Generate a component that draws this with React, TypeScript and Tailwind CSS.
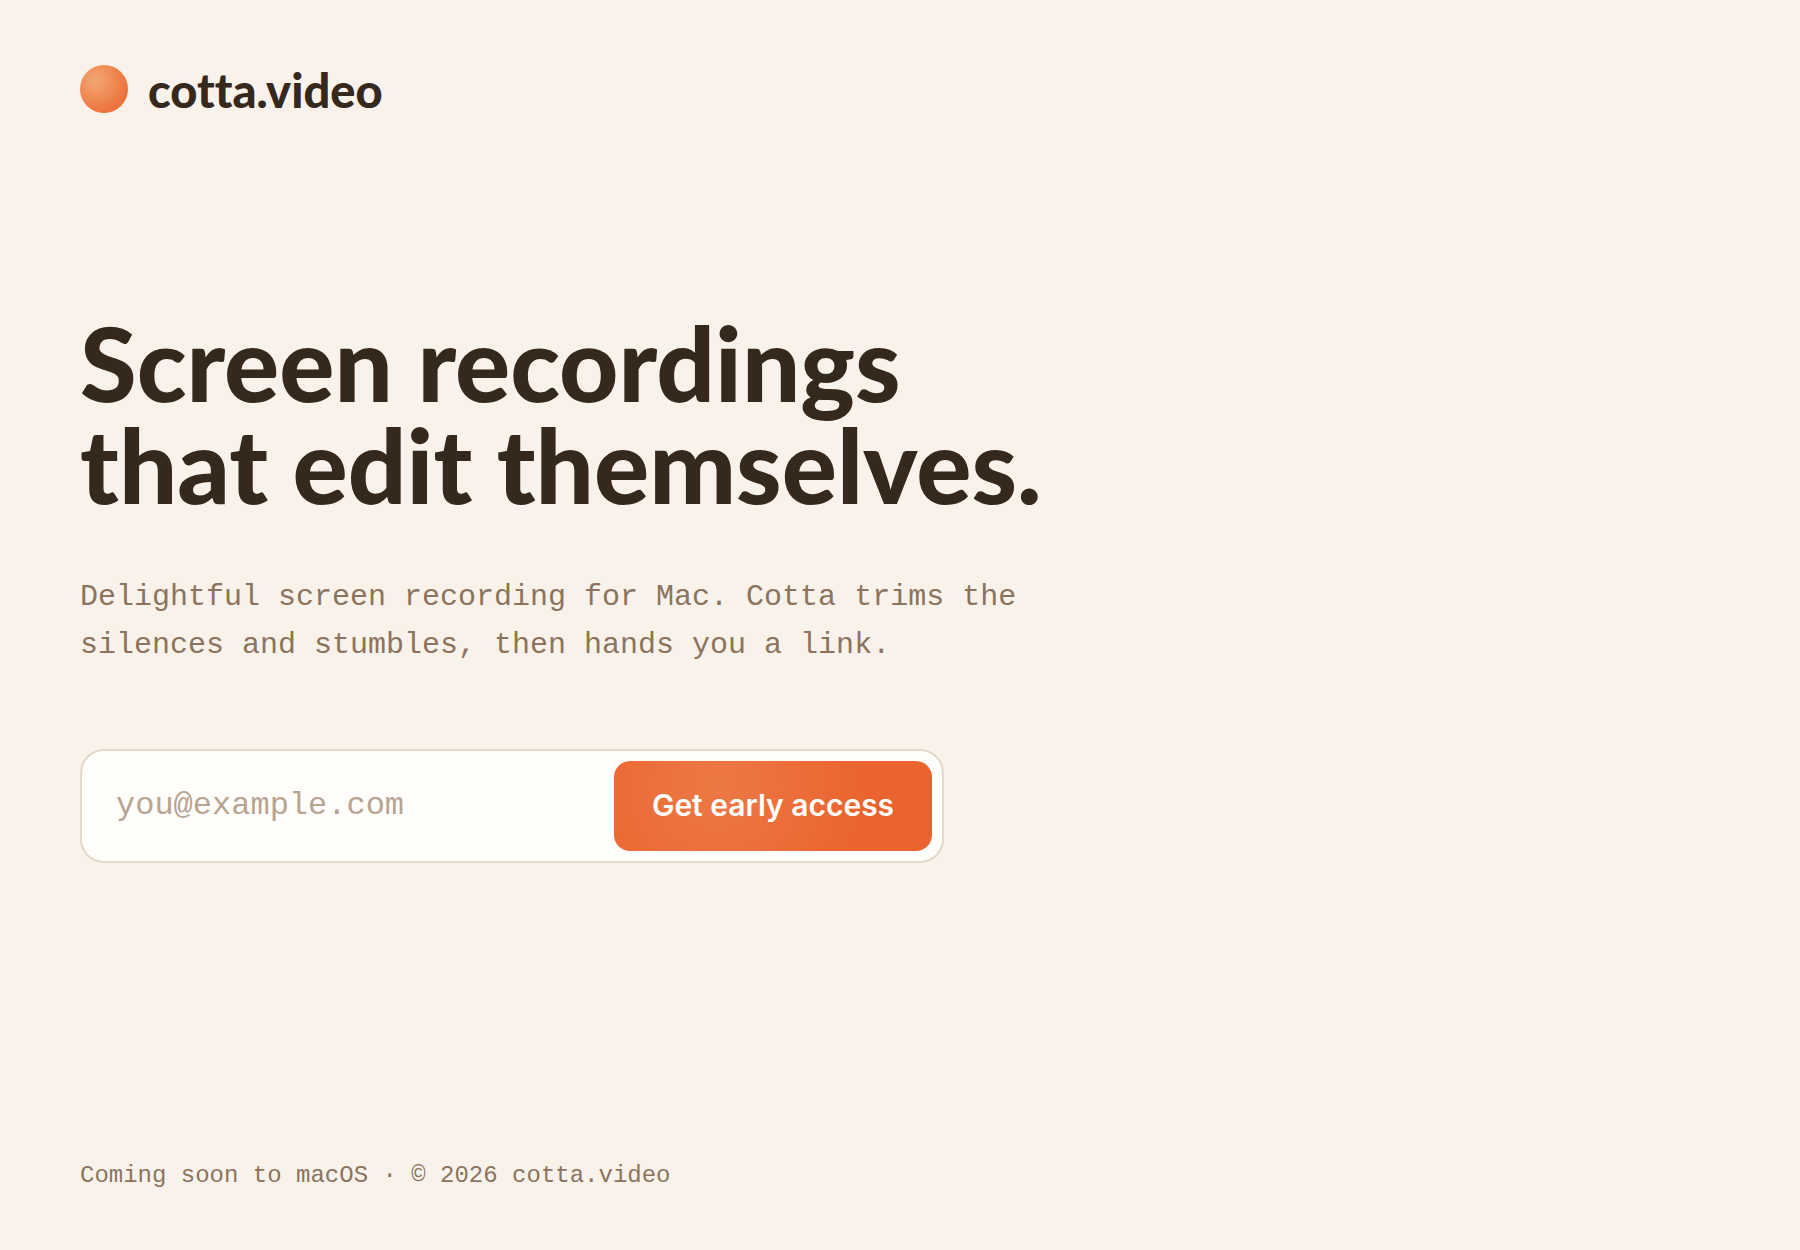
import { useState } from "react";

function Logo() {
  return (
    <a href="/" className="flex items-center gap-5 self-start">
      <span className="size-12 shrink-0 rounded-full bg-[radial-gradient(circle_at_32%_32%,#f2a873,#eb652f_90%)]" />
      <span className="pt-[2px] font-['Lato',sans-serif] text-[47px] leading-[46px] font-black text-[#35281d] [font-variant-ligatures:none]">
        cotta.video
      </span>
    </a>
  );
}

function SignupForm() {
  const [email, setEmail] = useState("");

  return (
    <form
      onSubmit={(e) => e.preventDefault()}
      className="flex w-full max-w-[864px] items-center rounded-3xl border-2 border-[#e3d8cb] bg-[#fffefa] p-[10px]"
    >
      <input
        type="email"
        aria-label="Email address"
        placeholder="you@example.com"
        value={email}
        onChange={(e) => setEmail(e.target.value)}
        className="min-w-0 flex-1 bg-transparent px-6 font-['Liberation_Mono',monospace] text-[32px] leading-10 text-[#35281d] outline-none placeholder:text-[#b8a493]"
      />
      <button
        type="submit"
        className="h-[90px] w-[318px] shrink-0 cursor-pointer rounded-2xl bg-[radial-gradient(circle_at_32%_28%,#ec7945,#eb632e_70%)] font-['Inter',sans-serif] text-[30px] font-semibold text-[#fffefa]"
      >
        Get early access
      </button>
    </form>
  );
}

export default function App() {
  return (
    <div className="flex min-h-screen flex-col bg-[#f9f2ea] px-20 pt-[65px] pb-14">
      <header className="flex">
        <Logo />
      </header>

      <main className="flex flex-1 flex-col justify-center pb-[98px]">
        <h1 className="font-['Lato',sans-serif] text-[103px] leading-[102px] font-black text-[#35281d]">
          Screen recordings
          <br />
          that edit themselves.
        </h1>
        <p className="mt-[58px] max-w-[960px] font-['Liberation_Mono',monospace] text-[30px] leading-12 text-[#8a745f]">
          Delightful screen recording for Mac. Cotta trims the silences and stumbles, then hands you a link.
        </p>
        <div className="mt-20">
          <SignupForm />
        </div>
      </main>

      <footer className="font-['Liberation_Mono',monospace] text-2xl leading-9 text-[#8a745f]">
        Coming soon to macOS · © 2026 cotta.video
      </footer>
    </div>
  );
}
